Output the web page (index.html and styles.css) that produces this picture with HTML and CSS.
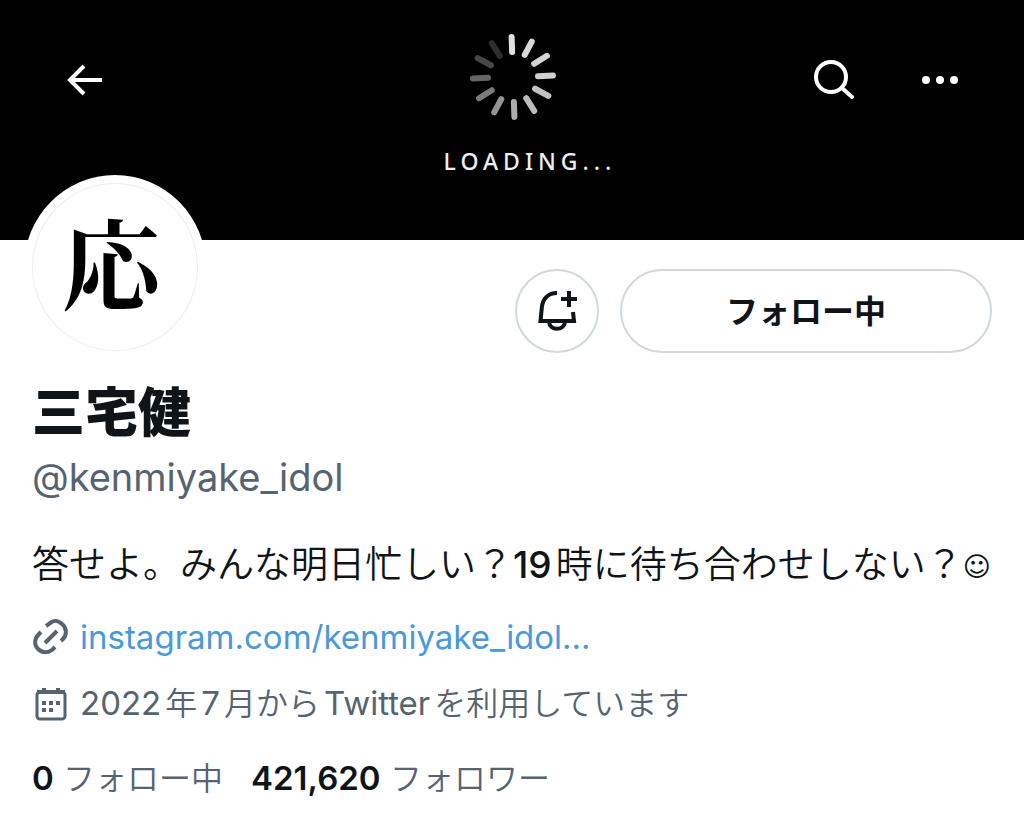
FILE: index.html
```html
<!DOCTYPE html>
<html lang="ja">
<head>
    <meta charset="UTF-8">
    <meta name="viewport" content="width=device-width, initial-scale=1.0">
    <title>三宅健 (@kenmiyake_idol)</title>
    <link rel="stylesheet" href="styles.css">
</head>
<body>
    <header class="banner">
        <button class="icon-button" type="button" aria-label="戻る">
            <svg width="40" height="40" viewBox="0 0 40 40" fill="none" stroke="#fff" stroke-width="4">
                <path d="M38 20H6M20 6L6 20l14 14"/>
            </svg>
        </button>

        <div class="loading">
            <svg class="spinner" width="88" height="88" viewBox="-44 -44 88 88" stroke="#fff" stroke-width="6" stroke-linecap="round">
                <g transform="rotate(-2)">
                    <path d="M0-25V-40" opacity=".88"/>
                    <path d="M0-25V-40" opacity=".85" transform="rotate(30)"/>
                    <path d="M0-25V-40" opacity=".83" transform="rotate(60)"/>
                    <path d="M0-25V-40" opacity=".82" transform="rotate(90)"/>
                    <path d="M0-25V-40" opacity=".76" transform="rotate(120)"/>
                    <path d="M0-25V-40" opacity=".74" transform="rotate(150)"/>
                    <path d="M0-25V-40" opacity=".68" transform="rotate(180)"/>
                    <path d="M0-25V-40" opacity=".58" transform="rotate(210)"/>
                    <path d="M0-25V-40" opacity=".48" transform="rotate(240)"/>
                    <path d="M0-25V-40" opacity=".4" transform="rotate(270)"/>
                    <path d="M0-25V-40" opacity=".28" transform="rotate(300)"/>
                    <path d="M0-25V-40" opacity=".18" transform="rotate(330)"/>
                </g>
            </svg>
            <span class="loading-text">LOADING...</span>
        </div>

        <div class="banner-actions">
            <button class="icon-button" type="button" aria-label="検索">
                <svg width="40" height="40" viewBox="0 0 40 40" fill="none" stroke="#fff" stroke-width="4" stroke-linecap="round">
                    <circle cx="17" cy="17" r="15"/>
                    <path d="M28 28l10 9"/>
                </svg>
            </button>
            <button class="icon-button" type="button" aria-label="その他">
                <svg width="40" height="40" viewBox="0 0 40 40" fill="#fff">
                    <circle cx="6" cy="20" r="4"/>
                    <circle cx="20" cy="20" r="4"/>
                    <circle cx="34" cy="20" r="4"/>
                </svg>
            </button>
        </div>
    </header>

    <main class="profile">
        <div class="profile-top">
            <div class="avatar"><span class="avatar-image">応</span></div>
            <button class="notify" type="button" aria-label="通知">
                <svg width="40" height="42" viewBox="0 0 40 42" fill="none" stroke="#0f1419" stroke-width="4">
                    <path d="M20 3C11 3 6 9 5 16L3.500 31H37L36 22"/>
                    <path d="M12 32c1 9 15 9 16 0"/>
                    <path d="M32 1v16M24 9h16"/>
                </svg>
            </button>
            <button class="follow" type="button">フォロー中</button>
        </div>

        <h1 class="name">三宅健</h1>
        <p class="handle">@kenmiyake_idol</p>
        <p class="bio">答せよ。みんな明日忙しい？<span class="number">19</span>時に待ち合わせしない？<span class="smile">☺</span></p>

        <p class="meta">
            <svg width="36" height="36" viewBox="0 0 36 36" fill="none" stroke="#566370" stroke-width="4">
                <path d="M13 24L25 12"/>
                <path d="M14 7L17 5C21 1 26 1 30 5c5 4 5 11 1 15l-2 2"/>
                <path d="M9 13L7 15C2 20 2 26 6 30c4 4 10 4 14 1l3-3"/>
            </svg>
            <a href="#">instagram.com/kenmiyake_idol...</a>
        </p>
        <p class="meta">
            <svg width="36" height="36" viewBox="0 0 36 36" fill="none" stroke="#566370">
                <rect x="5" y="6" width="28" height="27" rx="3" stroke-width="3"/>
                <path d="M5 6h28M12 2v6M26 2v6" stroke-width="4"/>
                <path d="M10 17h4m3 0h4m3 0h4M10 24h4m3 0h4" stroke-width="4"/>
            </svg>
            <span class="joined">2022<span class="ja">年</span>7<span class="ja">月から</span>Twitter<span class="ja">を利用しています</span></span>
        </p>
        <p class="stats">
            <a href="#"><strong>0</strong> <span class="ja">フォロー中</span></a>
            <a href="#"><strong>421,620</strong> <span class="ja">フォロワー</span></a>
        </p>
    </main>
</body>
</html>
```
FILE: styles.css
```css
* {
    box-sizing: border-box;
}

body {
    margin: 0;
    background: #fff;
    color: #0f1419;
    font-family: Inter, "Noto Sans CJK JP", sans-serif;
    font-size: 33px;
}

h1, p {
    margin: 0;
}

button {
    padding: 0;
    background: none;
    border: 0;
    color: inherit;
    font-family: inherit;
    cursor: pointer;
}

svg {
    display: block;
    flex-shrink: 0;
}

a {
    color: inherit;
    text-decoration: none;
}

/* Banner */
.banner {
    display: grid;
    grid-template-columns: 1fr auto 1fr;
    align-items: start;
    height: 240px;
    padding: 33px 64px 0;
    background: #000;
}

.icon-button {
    justify-self: start;
    margin-top: 27px;
}

.loading {
    display: flex;
    flex-direction: column;
    align-items: center;
    gap: 24px;
    padding-left: 36px;
    color: #eee;
}

.spinner {
    margin-right: 34px;
}

.loading-text {
    font-family: "Noto Sans", sans-serif;
    font-size: 23px;
    font-weight: 500;
    line-height: 32px;
    letter-spacing: 5px;
}

.banner-actions {
    display: flex;
    justify-content: flex-end;
    gap: 66px;
}

/* Profile */
.profile {
    padding: 0 32px 24px;
}

.profile-top {
    display: flex;
    align-items: flex-end;
    height: 113px;
}

.avatar {
    flex-shrink: 0;
    margin: 0 auto -6px -8px;
    padding: 8px;
    background: #fff;
    border-radius: 50%;
}

.avatar-image {
    display: flex;
    align-items: center;
    justify-content: center;
    width: 166px;
    height: 168px;
    padding: 0 8px 14px 0;
    border: 1px solid #eee;
    border-radius: 50%;
    color: #000;
    font-family: "Noto Serif CJK JP", "Noto Sans CJK JP", serif;
    font-size: 98px;
    font-weight: bold;
    line-height: 1;
}

.notify,
.follow {
    height: 84px;
    border: 2px solid #cfd9de;
    border-radius: 42px;
}

.notify {
    display: flex;
    align-items: center;
    justify-content: center;
    width: 84px;
    margin-right: 21px;
}

.follow {
    flex: 0 1 372px;
    padding-bottom: 4px;
    font-size: 32px;
    font-weight: bold;
}

.name {
    margin-top: 28px;
    font-size: 53px;
    font-weight: 900;
    line-height: 64px;
}

.handle {
    margin-top: 8px;
    color: #566370;
    font-size: 38px;
    line-height: 48px;
}

.bio {
    margin: 36px -16px 0 0;
    font-size: 37px;
    font-weight: 350;
    line-height: 56px;
}

.number {
    margin-right: 4px;
    font-weight: 500;
}

.smile {
    font-family: "DejaVu Sans", sans-serif;
    font-size: 27px;
    font-weight: bold;
    vertical-align: 2px;
}

.meta {
    display: flex;
    align-items: center;
    gap: 12px;
    margin-top: 18px;
    color: #566370;
    line-height: 48px;
}

.meta a {
    color: #4a99d9;
}

/* Japanese text set beside Latin text and figures */
.ja {
    font-size: 32px;
    font-weight: 350;
}

.joined .ja {
    margin: 0 4px;
}

.stats {
    display: flex;
    gap: 28px;
    margin-top: 26px;
    color: #566370;
    line-height: 48px;
}

.stats strong {
    color: #0f1419;
    font-weight: 600;
}
```
